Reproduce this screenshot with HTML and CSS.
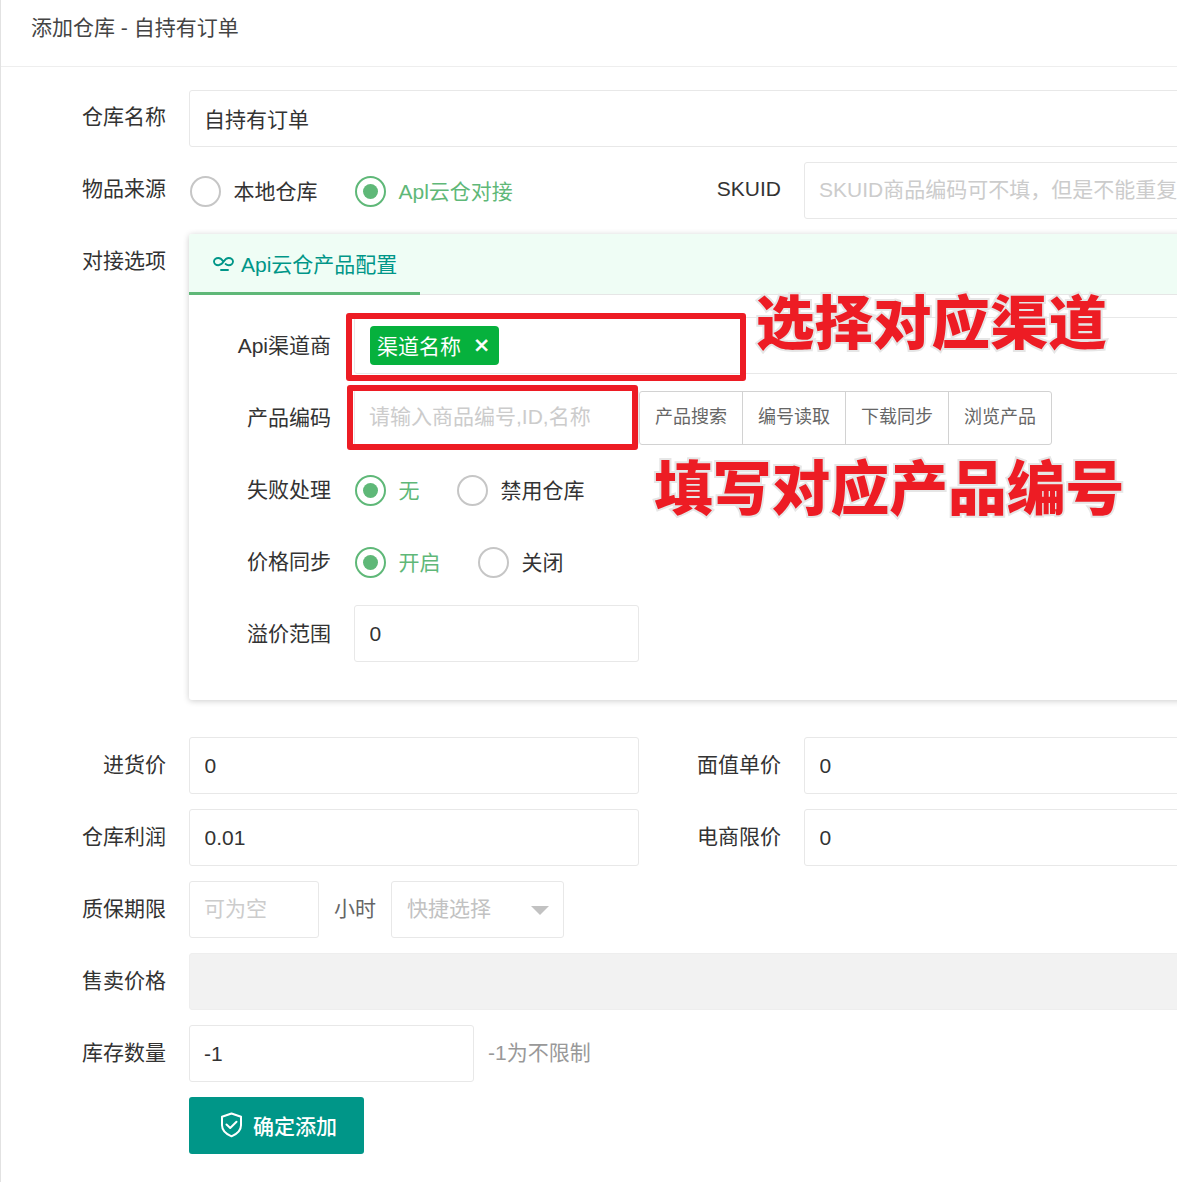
FILE: index.html
```html
<!DOCTYPE html>
<html lang="zh">
<head>
<meta charset="utf-8">
<title>添加仓库</title>
<link rel="stylesheet" href="styles.css">
</head>
<body>
<div class="page">
  <div class="head">添加仓库 - 自持有订单</div>
  <div class="form">
    <div class="row">
      <label class="lab top">仓库名称</label>
      <input class="inp grow cjk" value="自持有订单">
    </div>
    <div class="row">
      <label class="lab top">物品来源</label>
      <div class="radios src">
        <span class="radio"><i class="dot"></i>本地仓库</span>
        <span class="radio on"><i class="dot"></i>Apl云仓对接</span>
      </div>
      <label class="lab2 top">SKUID</label>
      <input class="inp grow cjk" placeholder="SKUID商品编码可不填，但是不能重复">
    </div>
    <div class="row cardrow">
      <label class="lab top">对接选项</label>
      <div class="card">
        <div class="tabs">
          <div class="tab">
            <svg class="linkicon" viewBox="0 0 21 14" width="21" height="14"><path d="M10.500 4.800C9 2.400 7.400 1 5.300 1 3 1 1 2.400 1 4.600S3 8.200 5.300 8.200c2.200 0 3.800-1.300 5.200-3.400 1.400-2.200 3-3.800 5.200-3.800 2.300 0 4.300 1.400 4.300 3.600s-2 3.600-4.300 3.600c-1.200 0-2.200-.4-3.100-1.100M8 13h7" fill="none" stroke="#009688" stroke-width="1.900" stroke-linecap="round"/></svg>
            Api云仓产品配置
          </div>
        </div>
        <div class="cardbody">
          <div class="row">
            <label class="lab sub">Api渠道商</label>
            <div class="inp grow tagbox"><span class="tag">渠道名称<b class="x">×</b></span></div>
          </div>
          <div class="row">
            <label class="lab sub">产品编码</label>
            <input class="inp half cjk" placeholder="请输入商品编号,ID,名称">
            <div class="btns">
              <span class="btn">产品搜索</span><span class="btn">编号读取</span><span class="btn">下载同步</span><span class="btn">浏览产品</span>
            </div>
          </div>
          <div class="row">
            <label class="lab sub">失败处理</label>
            <div class="radios">
              <span class="radio on"><i class="dot"></i>无</span>
              <span class="radio"><i class="dot"></i>禁用仓库</span>
            </div>
          </div>
          <div class="row">
            <label class="lab sub">价格同步</label>
            <div class="radios">
              <span class="radio on"><i class="dot"></i>开启</span>
              <span class="radio"><i class="dot"></i>关闭</span>
            </div>
          </div>
          <div class="row">
            <label class="lab sub">溢价范围</label>
            <input class="inp half" value="0">
          </div>
        </div>
      </div>
    </div>
    <div class="row">
      <label class="lab">进货价</label>
      <input class="inp col" value="0">
      <label class="lab2">面值单价</label>
      <input class="inp grow" value="0">
    </div>
    <div class="row">
      <label class="lab">仓库利润</label>
      <input class="inp col" value="0.01">
      <label class="lab2">电商限价</label>
      <input class="inp grow" value="0">
    </div>
    <div class="row">
      <label class="lab">质保期限</label>
      <input class="inp short cjk" placeholder="可为空">
      <span class="unit">小时</span>
      <div class="select">快捷选择<i class="arrow"></i></div>
    </div>
    <div class="row">
      <label class="lab">售卖价格</label>
      <input class="inp grow off" disabled>
    </div>
    <div class="row">
      <label class="lab">库存数量</label>
      <input class="inp half num" value="-1">
      <span class="hint">-1为不限制</span>
    </div>
    <div class="row">
      <span class="lab"></span>
      <button class="submit">
        <svg viewBox="0 0 23 26" width="23" height="26"><path d="M11.500 1.500 21 4.800v8.400c0 5-3.900 8.700-9.500 11.100C5.900 21.900 2 18.200 2 13.200V4.800z" fill="none" stroke="#fff" stroke-width="2" stroke-linejoin="round"/><path d="M6.500 12.500l3.700 3.500 6.300-6.300" fill="none" stroke="#fff" stroke-width="2" stroke-linecap="round" stroke-linejoin="round"/></svg>
        <span class="submit-text">确定添加</span>
      </button>
    </div>
  </div>
  <div class="mark mark1"></div>
  <div class="mark mark2"></div>
  <div class="note note1">选择对应渠道</div>
  <div class="note note2">填写对应产品编号</div>
</div>
</body>
</html>
```
FILE: styles.css
```css
* { box-sizing: border-box; }
html, body { margin: 0; padding: 0; background: #fff; overflow: hidden; }
body, input, button {
  font-family: "Liberation Sans", "Noto Sans CJK SC", sans-serif;
}
.page {
  position: relative;
  width: 1177px;
  height: 1182px;
  overflow: hidden;
  border-left: 1px solid #e2e2e2;
  color: #333;
  font-size: 21px;
}
.head {
  height: 67px;
  padding: 12px 0 0 30px;
  line-height: 32px;
  font-size: 21px;
  color: #444;
  border-bottom: 1px solid #eee;
}
.form { width: 1500px; padding-top: 23px; }
.row { display: flex; height: 57px; margin-bottom: 15px; align-items: flex-start; }
.lab {
  flex: none;
  width: 165px;
  margin-right: 23px;
  text-align: right;
  line-height: 56px;
  color: #333;
}
.lab.sub { width: 142px; margin-right: 23px; line-height: 57px; }
.lab2 {
  flex: none;
  width: 142px;
  margin-right: 23px;
  text-align: right;
  line-height: 56px;
}
.lab.top, .lab2.top { line-height: 54px; }
.inp {
  height: 57px;
  padding: 0 14.5px;
  border: 1px solid #e8e8e8;
  border-radius: 3px;
  background: #fff;
  font-size: 21px;
  color: #333;
  outline: none;
}
.inp::placeholder { color: #ccc; }
.cjk { padding: 0 14px 2px; }
.num { padding-left: 14px; }
.grow { width: 1200px; flex: none; }
.col { width: 450px; flex: none; }
.half { width: 285px; flex: none; }
.short { width: 130px; flex: none; }
.off { background: #f2f2f2; border-color: #eee; }
.radios { display: flex; gap: 37.5px; height: 55px; align-items: center; margin-left: 1px; }
.src { width: 449px; flex: none; }
.radio { display: flex; align-items: center; color: #333; white-space: nowrap; }
.dot {
  flex: none;
  position: relative;
  top: 2px;
  width: 31px;
  height: 31px;
  margin-right: 12.5px;
  border: 2px solid #c6c6c6;
  border-radius: 50%;
}
.radio.on { color: #5fb878; }
.radio.on .dot { border-color: #5fb878; }
.radio.on .dot::after {
  content: "";
  position: absolute;
  left: 6px;
  top: 6px;
  width: 15px;
  height: 15px;
  border-radius: 50%;
  background: #5fb878;
}
.cardrow { height: 466px; margin-bottom: 37px; }
.card {
  width: 1300px;
  height: 466px;
  flex: none;
  background: #fff;
  border-radius: 3px;
  box-shadow: 0 1px 6px rgba(0,0,0,.2);
}
.tabs {
  height: 61px;
  background: #effdf5;
  border-bottom: 1px solid #e6e6e6;
  border-radius: 3px 0 0 0;
}
.tab {
  display: flex;
  align-items: center;
  gap: 7px;
  width: 231px;
  height: 61px;
  padding-left: 24px;
  color: #009688;
  border-bottom: 3px solid #5fb878;
}
.linkicon { flex: none; margin-top: 2px; }
.cardbody { padding-top: 22px; }
.tagbox { display: flex; align-items: center; padding: 0 0 0 15px; }
.tag {
  display: flex;
  align-items: center;
  height: 39px;
  padding: 0 10px 1px 7px;
  border-radius: 4px;
  background: #06b13d;
  color: #fff;
}
.x { font-weight: 400; font-size: 26px; margin-left: 13px; line-height: 1; -webkit-text-stroke: .5px #fff; }
.btns {
  display: flex;
  margin-top: 2px;
  height: 54px;
  border: 1px solid #d2d2d2;
  border-radius: 3px;
}
.btn {
  width: 103px;
  line-height: 50px;
  text-align: center;
  font-size: 18px;
  color: #666;
  border-left: 1px solid #d2d2d2;
}
.btn:first-child { border-left: 0; width: 102px; }
.unit { flex: none; margin: 0 15px; line-height: 56px; color: #666; }
.select {
  position: relative;
  width: 173px;
  height: 57px;
  padding-left: 15px;
  line-height: 54px;
  color: #c2c2c2;
  border: 1px solid #e8e8e8;
  border-radius: 3px;
}
.arrow {
  position: absolute;
  right: 14px;
  top: 24px;
  border: 9px solid transparent;
  border-top: 9px solid #c2c2c2;
  border-bottom: 0;
}
.hint { margin-left: 14px; line-height: 56px; color: #999; }
.submit {
  display: flex;
  align-items: center;
  gap: 10px;
  width: 175px;
  height: 57px;
  padding: 0 0 0 31px;
  border: 0;
  border-radius: 3px;
  background: #009688;
  color: #fff;
  font-size: 21px;
}
.submit svg { flex: none; margin-top: -2px; }
.submit-text { position: relative; top: -1px; font-weight: 500; }
.mark {
  position: absolute;
  border: 6px solid #ed1c24;
  border-radius: 3px;
}
.mark1 { left: 345px; top: 313px; width: 400px; height: 68px; }
.mark2 { left: 346px; top: 385px; width: 291px; height: 65px; }
.note {
  position: absolute;
  color: #ed1c24;
  font-family: "Noto Sans CJK SC", sans-serif;
  font-weight: 900;
  white-space: nowrap;
  font-size: 58.5px;
  line-height: 86px;
  -webkit-text-stroke: 4px #e6e6e6;
  paint-order: stroke fill;
}
.note1 { left: 755px; top: 276px; }
.note2 { left: 653px; top: 442px; font-size: 58.8px; }
```
